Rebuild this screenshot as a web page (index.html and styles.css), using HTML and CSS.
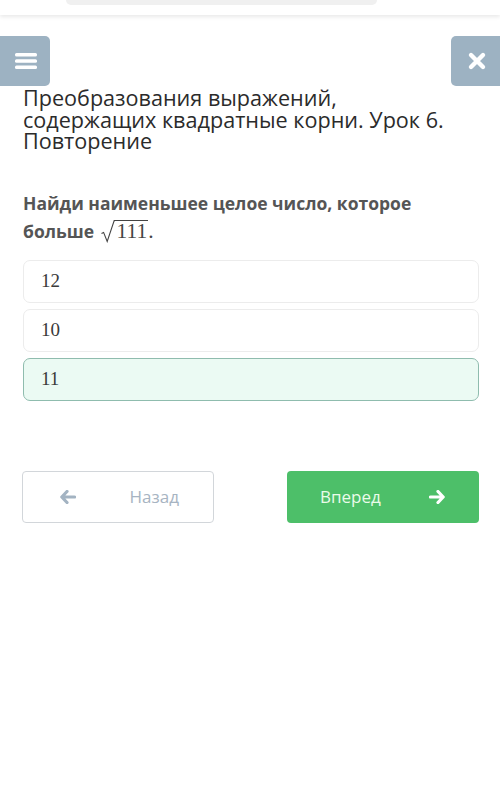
FILE: index.html
```html
<!DOCTYPE html>
<html lang="ru">
<head>
    <meta charset="UTF-8">
    <meta name="viewport" content="width=device-width, initial-scale=1.0">
    <title>Тест</title>
    <link rel="stylesheet" href="styles.css">
</head>
<body>
    <div class="topbar">
        <div class="search"></div>
    </div>
    <div class="toolbar">
        <div class="tool-btn menu-btn">
            <svg width="24" height="20" viewBox="0 0 24 20">
                <rect x="1" y="2" width="22" height="3.4" rx="1.5" fill="#fff"/>
                <rect x="1" y="8.3" width="22" height="3.4" rx="1.5" fill="#fff"/>
                <rect x="1" y="14.6" width="22" height="3.4" rx="1.5" fill="#fff"/>
            </svg>
        </div>
        <div class="tool-btn close-btn">
            <svg width="20" height="20" viewBox="0 0 20 20">
                <path d="M4 4 L16 16 M16 4 L4 16" stroke="#fff" stroke-width="4.4" stroke-linecap="round"/>
            </svg>
        </div>
    </div>
    <div class="container">
        <h1>Преобразования выражений, содержащих квадратные корни. Урок 6. Повторение</h1>
        <p class="question">Найди наименьшее целое число, которое больше <svg class="radical" width="14" height="23" viewBox="0 0 14 23"><path d="M0.5 13.5 L2.6 12.4 L6.2 21.5 L13.2 0.6 H14" stroke="#444" stroke-width="1.1" fill="none"/></svg><span class="radicand">111</span><span class="dot">.</span></p>
        <div class="options">
            <div class="option">12</div>
            <div class="option">10</div>
            <div class="option selected">11</div>
        </div>
        <div class="nav">
            <div class="nav-btn back">
                <svg width="16" height="14" viewBox="0 0 16 14">
                    <path d="M7 1.5 L1.8 7 L7 12.5 M2.5 7 H14.5" stroke="#a3b3c2" stroke-width="3.2" fill="none" stroke-linecap="round" stroke-linejoin="round"/>
                </svg>
                <span>Назад</span>
            </div>
            <div class="nav-btn next">
                <span>Вперед</span>
                <svg width="16" height="14" viewBox="0 0 16 14">
                    <path d="M9 1.5 L14.2 7 L9 12.5 M13.5 7 H1.5" stroke="#fff" stroke-width="3.2" fill="none" stroke-linecap="round" stroke-linejoin="round"/>
                </svg>
            </div>
        </div>
    </div>
</body>
</html>
```

FILE: styles.css
```css
body {
    margin: 0;
    padding: 0;
    background-color: #fff;
    font-family: "Open Sans", "Noto Sans", sans-serif;
}
.topbar {
    height: 15px;
    background-color: #fff;
    box-shadow: 0 2px 4px rgba(0, 0, 0, 0.09);
}
.search {
    margin-left: 66px;
    width: 311px;
    height: 5px;
    background-color: #f0f0f0;
    border-radius: 0 0 14px 14px;
}
.toolbar {
    display: flex;
    justify-content: space-between;
    margin-top: 21px;
}
.tool-btn {
    width: 50px;
    height: 50px;
    background-color: #9db2c2;
    border-radius: 5px;
    display: flex;
    align-items: center;
    justify-content: center;
}
.menu-btn {
    border-radius: 0 5px 5px 0;
}
.menu-btn svg {
    margin-left: 1px;
}
.close-btn {
    width: 49px;
    border-radius: 5px 0 0 5px;
}
.close-btn svg {
    margin-left: 2px;
}
.container {
    padding: 0 21px 0 23px;
}
h1 {
    margin: 1px 0 0;
    font-size: 21.6px;
    font-weight: 400;
    line-height: 21.5px;
    color: #2b2b2b;
    padding-right: 10px;
}
.question {
    margin: 37px 0 0;
    padding-right: 40px;
    font-size: 17.5px;
    font-weight: 700;
    line-height: 28px;
    color: #555;
}
.radical {
    vertical-align: -5px;
    margin-left: 2px;
}
.radicand,
.dot {
    font-family: "Liberation Serif", "DejaVu Serif", serif;
    font-weight: 400;
    font-size: 21.5px;
    color: #444;
}
.radicand {
    display: inline-block;
    line-height: 20px;
    border-top: 1.1px solid #444;
    padding: 0 1px 0 2px;
}
.options {
    margin-top: 15px;
    display: flex;
    flex-direction: column;
    gap: 6px;
}
.option {
    height: 41px;
    border: 1px solid #ececec;
    border-radius: 7px;
    padding-left: 17px;
    display: flex;
    align-items: center;
    font-family: "Liberation Serif", "DejaVu Serif", serif;
    font-size: 19px;
    color: #3a3a3a;
}
.option.selected {
    background-color: #ebfaf3;
    border-color: #8fbcae;
}
.nav {
    margin-top: 70px;
    display: flex;
    justify-content: space-between;
    margin-left: -1px;
}
.nav-btn {
    width: 192px;
    height: 52px;
    box-sizing: border-box;
    border-radius: 4px;
    display: flex;
    align-items: center;
    justify-content: space-between;
    font-size: 17px;
}
.nav-btn.back {
    border: 1px solid #d2d6da;
    padding: 0 34px 0 37px;
    color: #a7b4c2;
}
.nav-btn.next {
    background-color: #4dbf69;
    padding: 0 34px 0 33px;
    color: #eafbe9;
}
```
